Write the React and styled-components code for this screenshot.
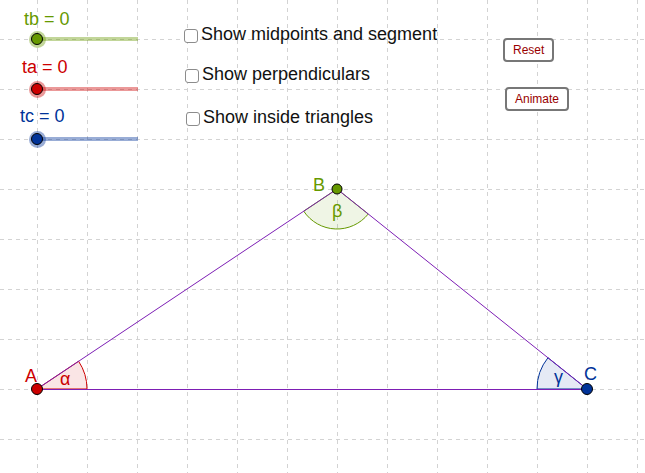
import React from 'react';
import styled, { createGlobalStyle } from 'styled-components';

const GREEN = 'rgb(102, 153, 0)';
const RED = 'rgb(204, 0, 0)';
const BLUE = 'rgb(0, 51, 153)';
const LINE = 'rgb(125, 30, 180)';

const A = { x: 37, y: 389 };
const B = { x: 337, y: 189 };
const C = { x: 587, y: 389 };

const sliders = [
	{ name: 'tb', color: GREEN, halo: 'rgba(102, 153, 0, 0.4)', dx: 4, lift: 1 },
	{ name: 'ta', color: RED, halo: 'rgba(204, 0, 0, 0.4)', dx: 2, lift: 3 },
	{ name: 'tc', color: BLUE, halo: 'rgba(0, 51, 153, 0.4)', dx: 0, lift: 4 },
];

const options = [
	{ text: 'Show midpoints and segment', indent: 0, drop: 0 },
	{ text: 'Show perpendiculars', indent: 1, drop: 0 },
	{ text: 'Show inside triangles', indent: 2, drop: 3 },
];

// point on circle around p, angle in degrees (screen coords, y down)
const polar = (p, r, deg) => {
	const a = (deg * Math.PI) / 180;
	return { x: p.x + r * Math.cos(a), y: p.y + r * Math.sin(a) };
};

const angleTo = (p, q) => (Math.atan2(q.y - p.y, q.x - p.x) * 180) / Math.PI;

const sector = (p, r, from, to, sweep) => {
	const s = polar(p, r, from);
	const e = polar(p, r, to);
	return `M${p.x},${p.y} L${s.x},${s.y} A${r},${r} 0 0 ${sweep} ${e.x},${e.y} Z`;
};

const Grid = () => {
	const xs = [];
	for (let x = 37; x < 645; x += 50) xs.push(x);
	const ys = [];
	for (let y = 39; y < 473; y += 50) ys.push(y);
	return (
		<g stroke='#d3d3d3' strokeWidth='1' strokeDasharray='4 4'>
			{xs.map((x) => (
				<line key={'x' + x} x1={x + 0.5} y1='0' x2={x + 0.5} y2='473' />
			))}
			{ys.map((y) => (
				<line key={'y' + y} x1='0' y1={y + 0.5} x2='645' y2={y + 0.5} />
			))}
		</g>
	);
};

const Construction = () => (
	<Drawing width='645' height='473' viewBox='0 0 645 473'>
		<Grid />
		<path
			d={sector(A, 50, angleTo(A, B), 0, 1)}
			fill='rgba(204, 0, 0, 0.1)'
			stroke={RED}
			strokeWidth='1'
		/>
		<path
			d={sector(B, 40, angleTo(B, A), angleTo(B, C), 0)}
			fill='rgba(102, 153, 0, 0.1)'
			stroke={GREEN}
			strokeWidth='1'
		/>
		<path
			d={sector(C, 50, 180, 360 - Math.abs(angleTo(C, B)), 1)}
			fill='rgba(0, 51, 153, 0.1)'
			stroke={BLUE}
			strokeWidth='1'
		/>
		<g stroke={LINE} fill='none'>
			<line x1={A.x} y1={A.y} x2={B.x} y2={B.y} strokeWidth='1' />
			<line x1={B.x} y1={B.y} x2={C.x} y2={C.y} strokeWidth='1' />
			<line x1={A.x} y1={A.y + 0.5} x2={C.x} y2={C.y + 0.5} strokeWidth='1.2' />
		</g>
		<g stroke='#000' strokeWidth='1'>
			<circle cx={A.x} cy={A.y} r='5.5' fill={RED} />
			<circle cx={B.x} cy={B.y} r='5' fill={GREEN} />
			<circle cx={C.x} cy={C.y} r='5.5' fill={BLUE} />
		</g>
		<g fontFamily="'Liberation Sans', Arial, sans-serif" fontSize='18'>
			<text x='25' y='382' fill={RED}>A</text>
			<text x='313' y='191' fill={GREEN}>B</text>
			<text x='584' y='380' fill={BLUE}>C</text>
			<text x='60' y='385' fill={RED}>α</text>
			<text x='332' y='217' fill={GREEN}>β</text>
			<text x='554' y='383' fill={BLUE}>γ</text>
		</g>
	</Drawing>
);

const App = () => {
	return (
		<>
			<GlobalStyle />
			<Applet>
				<Construction />
				<Controls>
					<SliderColumn>
						{sliders.map((s) => (
							<SliderGroup key={s.name}>
								<SliderLabel color={s.color} $dx={s.dx} $lift={s.lift}>
									{s.name} = 0
								</SliderLabel>
								<Slider $rail={s.halo}>
									<Knob color={s.color} $halo={s.halo} />
								</Slider>
							</SliderGroup>
						))}
					</SliderColumn>
					<CheckColumn>
						{options.map((o) => (
							<CheckRow key={o.text} $indent={o.indent} $drop={o.drop}>
								<Box />
								<span>{o.text}</span>
							</CheckRow>
						))}
					</CheckColumn>
					<ButtonColumn>
						<Button>Reset</Button>
						<Button $shift={2}>Animate</Button>
					</ButtonColumn>
				</Controls>
			</Applet>
		</>
	);
};

const GlobalStyle = createGlobalStyle`
	html, body {
		margin: 0;
		padding: 0;
		background: #fff;
	}
	body {
		font-family: 'Liberation Sans', Arial, sans-serif;
	}
`;

const Applet = styled.div`
	position: relative;
	width: 645px;
	height: 473px;
	overflow: hidden;
	background: #fff;
`;

const Drawing = styled.svg`
	position: absolute;
	top: 0;
	left: 0;
	display: block;
`;

const Controls = styled.div`
	position: absolute;
	top: 0;
	left: 0;
	right: 0;
	display: grid;
	grid-template-columns: 164px 319px auto;
	padding-left: 20px;
`;

const SliderColumn = styled.div`
	display: flex;
	flex-direction: column;
`;

const SliderGroup = styled.div`
	display: flex;
	flex-direction: column;
	justify-content: flex-end;
	height: 50px;
`;

const SliderLabel = styled.div`
	font-size: 18px;
	line-height: 20px;
	color: ${(props) => props.color};
	margin-left: ${(props) => props.$dx}px;
	margin-bottom: ${(props) => props.$lift}px;
`;

const Slider = styled.div`
	position: relative;
	display: flex;
	align-items: center;
	width: 112px;
	height: 18px;
	margin: 0 0 2px 8px;

	&::before {
		content: '';
		position: absolute;
		left: 9px;
		top: 7px;
		width: 101px;
		height: 4px;
		background: ${(props) => props.$rail};
	}
`;

const Knob = styled.div`
	position: relative;
	width: 17px;
	height: 17px;
	margin-left: 0.5px;
	border-radius: 50%;
	background: ${(props) => props.$halo};
	display: flex;
	align-items: center;
	justify-content: center;

	&::after {
		content: '';
		width: 10px;
		height: 10px;
		border-radius: 50%;
		border: 1px solid #000;
		background: ${(props) => props.color};
	}
`;

const CheckColumn = styled.div`
	display: flex;
	flex-direction: column;
	gap: 19px;
	padding-top: 24px;
`;

const CheckRow = styled.label`
	display: flex;
	align-items: flex-start;
	gap: 3px;
	margin-left: ${(props) => props.$indent}px;
	margin-top: ${(props) => props.$drop}px;
	font-size: 18px;
	line-height: 21px;
	color: #111;
	white-space: nowrap;
`;

const Box = styled.span`
	box-sizing: border-box;
	width: 14px;
	height: 14px;
	margin-top: 5px;
	border: 1.5px solid #8c8c8c;
	border-radius: 3px;
	background: #fff;
	flex-shrink: 0;
`;

const ButtonColumn = styled.div`
	display: flex;
	flex-direction: column;
	align-items: flex-start;
	gap: 25px;
	padding-top: 38px;
`;

const Button = styled.button`
	box-sizing: border-box;
	height: 24px;
	margin-left: ${(props) => props.$shift || 0}px;
	padding: 0 8px;
	font-family: 'Liberation Sans', Arial, sans-serif;
	font-size: 12px;
	line-height: 20px;
	color: rgb(153, 0, 0);
	background: #fff;
	border: 2px solid #777;
	border-radius: 4px;
	cursor: pointer;
`;

export default App;
